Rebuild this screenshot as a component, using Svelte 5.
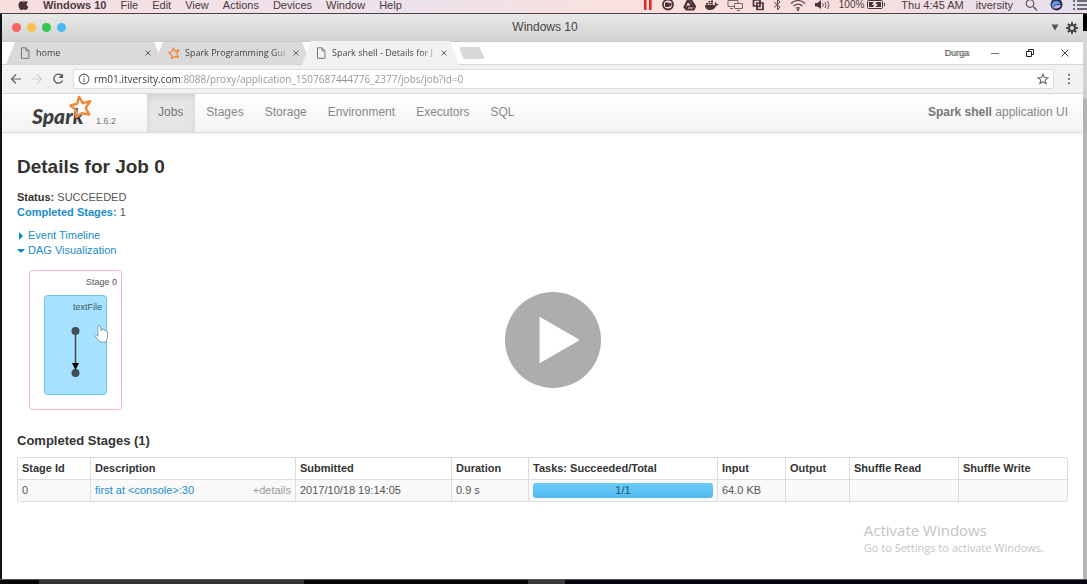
<script>
  const menus = ['File', 'Edit', 'View', 'Actions', 'Devices', 'Window', 'Help'];
  const tabs = [
    { title: 'home', icon: 'page' },
    { title: 'Spark Programming Gui', icon: 'spark' },
    { title: 'Spark shell - Details for J', icon: 'page', active: true }
  ];
  const sections = ['Jobs', 'Stages', 'Storage', 'Environment', 'Executors', 'SQL'];
  const columns = [
    ['Stage Id', 73], ['Description', 205], ['Submitted', 156], ['Duration', 77],
    ['Tasks: Succeeded/Total', 189], ['Input', 68], ['Output', 64],
    ['Shuffle Read', 109], ['Shuffle Write', 109]
  ];
  let url = $state('rm01.itversity.com:8088/proxy/application_1507687444776_2377/jobs/job?id=0');
</script>

{#snippet star(size)}
  <svg width={size} height={size} viewBox="0 0 24 24" fill="none" stroke="#f0883a" stroke-width="2.6" stroke-linejoin="round">
    <path d="M10.500 2l4 6.500 7.500-2-4.500 7 3.500 7-7.500-1.500-6 4-.5-7.500L1.500 11l7-2z" />
  </svg>
{/snippet}

<div class="screen">
  <header class="menubar">
    <nav class="menus" aria-label="Application menu">
      <svg class="apple" width="11" height="13" viewBox="0 0 11 13"><path fill="#4a3338" d="M7.5 0C7.4 1.500 6.500 2.500 5.300 2.600 5.300 1.300 6.300.3 7.500 0zM10 4.200C8 5.500 8.400 8 10.500 8.800 9.800 10.700 8.800 12 7.700 12c-.8 0-1.200-.5-2.100-.5s-1.400.5-2.200.5C2 12 .5 9.500.5 7c0-2.400 1.500-3.700 3-3.700.9 0 1.500.5 2.100.5s1.300-.6 2.300-.6c.8 0 1.600.4 2.100 1z" /></svg>
      <a class="app" href="#app">Windows 10</a>
      {#each menus as m}<a href="#menu">{m}</a>{/each}
    </nav>
    <div class="status">
      <svg width="10" height="14" viewBox="0 0 10 14" fill="#e02428"><path d="M1 0h2.500v12H1zM6 0h2.500v12H6z" /></svg>
      <svg width="14" height="14" viewBox="0 0 14 14"><circle cx="7" cy="6.500" r="5" fill="none" stroke="#4a3338" stroke-width="1.800" /><path d="M4 4.500h4.500v1L10.500 4.500v4l-2-1V9H4z" fill="#4a3338" /></svg>
      <svg width="13" height="14" viewBox="0 0 13 14" fill="none" stroke="#4a3338" stroke-width="2.200"><path d="M5 2L1.500 9l2 2.500h7l1.500-3L8 2zM5 2l4.500 6.500H4.500L3 11" /></svg>
      <svg width="15" height="14" viewBox="0 0 15 14" fill="#4a3338"><path d="M1 7h10c0-1-.4-2 .4-3 1 .6 1.200 1.400 1.200 2 .8-.2 1.500 0 2 .3-.5 1-1.400 1.200-2.300 1.200C11 10.500 9 12 6 12 3 12 1 10.500 1 7zM2 5h2v1.500H2zM4.500 5h2v1.500h-2zM7 5h2v1.500H7zM4.500 3h2v1.500h-2zM7 3h2v1.500H7zM7 1h2v1.500H7z" /></svg>
      <svg width="17" height="14" viewBox="0 0 17 14" fill="none" stroke="#7a6468" stroke-width="1"><path d="M7 8.500H1v-6h10v3M3 10.500h3M7.500 5.500h8v5h-8zM10 12.500h3" /></svg>
      <svg width="13" height="14" viewBox="0 0 13 14" fill="none" stroke="#4a3338" stroke-width="1.700"><path d="M4.500 8H1.500V2H8v3M5 5h6v6.500H5zM8 5v3.500H5" /></svg>
      <svg width="9" height="14" viewBox="0 0 9 14" fill="none" stroke="#5e484d" stroke-width="1"><path d="M1 4l6 5-2.500 3V1.500L7 4 1 9.500" /></svg>
      <svg width="16" height="14" viewBox="0 0 16 14" fill="none" stroke="#5e484d" stroke-width="1.200"><path d="M1 5.500c4-4 10-4 14 0M3.500 8c3-2.600 6-2.600 9 0M6 10.200c1.500-1 2.500-1 4 0" /><circle cx="8" cy="11.700" r=".6" /></svg>
      <svg width="17" height="14" viewBox="0 0 17 14"><path d="M1 5h2.500L7 2v9L3.500 8.500H1z" fill="#4a3338" /><path d="M8.500 5q1.500 2 0 4M11 4q2 3 0 6M13.500 3q3 4 0 8" fill="none" stroke="#6a5459" /></svg>
      <span class="battery">100%
        <svg width="19" height="14" viewBox="0 0 19 14"><rect x=".5" y="2.500" width="15" height="8" rx="1" fill="none" stroke="#4a3338" /><path d="M2 4h4.500L5 7h2.500L6 9H2zM9.500 4H14v5H8.500L11 6H8.500zM17 5h1v3h-1z" fill="#4a3338" /></svg>
      </span>
      <time>Thu 4:45 AM</time>
      <span class="account">itversity</span>
      <svg width="13" height="14" viewBox="0 0 13 14" fill="none" stroke="#5e5058" stroke-width="1.200"><circle cx="5" cy="5.500" r="3.800" /><path d="M8 8.500l4 4" /></svg>
      <svg class="siri" width="13" height="14" viewBox="0 0 13 14"><circle cx="6.500" cy="6.500" r="6" fill="#29294d" /><path d="M2 5q5-5 9 1-4-1-9 4z" fill="#5d9be8" /><path d="M3 10q3-4 8-3-2 5-8 3z" fill="#c0b5ee" /></svg>
      <svg width="15" height="14" viewBox="0 0 15 14" stroke="#4a4550" stroke-width="1.300"><path d="M1 3h2M5 3h10M1 7h2M5 7h10M1 11h2M5 11h10" /></svg>
    </div>
  </header>

  <div class="window">
    <div class="titlebar">
      <div class="lights"><i class="red"></i><i class="yellow"></i><i class="green"></i><i class="blue"></i></div>
      <span>Windows 10</span>
      <div class="tools">
        <svg width="8" height="7" viewBox="0 0 8 7"><path d="M.5.5h7L4 6.500z" fill="#555" /></svg>
        <svg width="12" height="12" viewBox="0 0 12 12" fill="none" stroke="#444"><circle cx="6" cy="6" r="3" stroke-width="2" /><path stroke-width="1.800" d="M6 0v2.500M6 9.500V12M0 6h2.500M9.500 6H12M1.800 1.800l1.700 1.700M8.500 8.500l1.700 1.700M10.200 1.800L8.500 3.500M3.500 8.500l-1.700 1.700" /></svg>
      </div>
    </div>

    <div class="tabstrip">
      {#each tabs as t}
        <div class="tab" class:active={t.active}>
          {#if t.icon === 'page'}
            <svg width="11" height="12" viewBox="0 0 11 12" fill="none" stroke="#777"><path d="M1.500.8h4.500l3 3v7.500H1.500zM6 .8v3h3" /></svg>
          {:else}{@render star(12)}{/if}
          <a href="#tab">{t.title}</a>
          <button aria-label="Close tab"><svg width="6" height="6" viewBox="0 0 6 6" stroke="#666"><path d="M.5.5l5 5M5.500.5l-5 5" /></svg></button>
        </div>
      {/each}
      <button class="newtab" aria-label="New tab"></button>
      <div class="controls">
        <span class="user">Durga</span>
        <button aria-label="Minimize"><svg width="10" height="10" viewBox="0 0 10 10" stroke="#777"><path d="M1 5.500h8" /></svg></button>
        <button aria-label="Restore"><svg width="10" height="10" viewBox="0 0 10 10" fill="none" stroke="#222"><path d="M1.500 3.500h5v5h-5zM3.500 3.500v-2h5v5h-2" /></svg></button>
        <button aria-label="Close"><svg width="10" height="10" viewBox="0 0 10 10" stroke="#444"><path d="M1.500 1.500l7 7M8.500 1.500l-7 7" /></svg></button>
      </div>
    </div>

    <div class="toolbar">
      <button aria-label="Back"><svg width="12" height="12" viewBox="0 0 12 12" fill="none" stroke="#666" stroke-width="1.200"><path d="M11 6H1.500M6 1.500L1.500 6 6 10.500" /></svg></button>
      <button aria-label="Forward"><svg width="12" height="12" viewBox="0 0 12 12" fill="none" stroke="#d2d2d2" stroke-width="1.200"><path d="M1 6h9.500M6 1.500L10.500 6 6 10.500" /></svg></button>
      <button aria-label="Reload"><svg width="12" height="12" viewBox="0 0 12 12"><path d="M10 3A4.500 4.500 0 1 0 10.500 7.500" fill="none" stroke="#555" stroke-width="1.300" /><path d="M11 .5V5H6.500z" fill="#555" /></svg></button>
      <div class="address">
        <svg width="12" height="12" viewBox="0 0 12 12" fill="none" stroke="#666" stroke-width="1.100"><circle cx="6" cy="6" r="4.900" /><path d="M6 5.200V9M6 3v1.200" /></svg>
        <input aria-label="Address" bind:value={url} />
        <button aria-label="Bookmark"><svg width="12" height="12" viewBox="0 0 12 12" fill="none" stroke="#666" stroke-width="1.100"><path d="M6 1.200l1.400 3.300 3.500.3L8.200 7.100l.9 3.500L6 8.700l-3.100 1.900.9-3.500L1.100 4.800l3.500-.3z" /></svg></button>
      </div>
      <button aria-label="Menu"><svg width="12" height="12" viewBox="0 0 12 12" fill="#555"><circle cx="6" cy="1.800" r="1" /><circle cx="6" cy="6" r="1" /><circle cx="6" cy="10.200" r="1" /></svg></button>
    </div>

    <nav class="sparknav" aria-label="Spark">
      <a class="brand" href="#spark" aria-label="Spark 1.6.2">
        <span class="logo">Spark<span class="logostar">{@render star(23)}</span></span>
        <span class="version">1.6.2</span>
      </a>
      {#each sections as s, i}<a class="section" class:current={i === 0} href="#{s}">{s}</a>{/each}
      <p><b>Spark shell</b> application UI</p>
    </nav>

    <main>
      <h1>Details for Job 0</h1>
      <ul>
        <li><b>Status:</b> SUCCEEDED</li>
        <li><a href="#completed"><b>Completed Stages:</b></a> 1</li>
      </ul>
      <div class="toggles">
        <a href="#timeline"><svg width="8" height="8" viewBox="0 0 8 8"><path d="M2 0l4 4-4 4z" fill="#08c" /></svg>Event Timeline</a>
        <a href="#dag"><svg width="8" height="8" viewBox="0 0 8 8"><path d="M0 2h8L4 6z" fill="#08c" /></svg>DAG Visualization</a>
      </div>

      <svg class="dag" width="94" height="141" viewBox="0 0 94 141" role="img" aria-label="Stage 0, textFile">
        <rect x=".5" y=".5" width="92" height="139" rx="3" fill="#fff" stroke="#f7b4c4" />
        <text x="88" y="15" text-anchor="end">Stage 0</text>
        <rect x="15.500" y="25.500" width="62" height="99" rx="3" fill="#a6e2ff" stroke="#6cc4ee" />
        <text x="73" y="40" text-anchor="end">textFile</text>
        <path d="M46.500 61v36" stroke="#444" stroke-width="1.500" />
        <circle cx="46.500" cy="61" r="4" fill="#444f55" />
        <circle cx="46.500" cy="103" r="4" fill="#444f55" />
        <path d="M43 93h7l-3.500 7z" fill="#000" />
        <path d="M69 56.500c0-1.500 2-1.500 2.300 0l1 4.500.3-2h2l.4 1 1.700.2.3.8 1.500.5v6l-1.500 4.500h-6l-2.800-3.500-2.700-3c.8-1.500 2.200-1 3.500.8z" fill="#fff" stroke="#667d94" stroke-width=".7" />
      </svg>

      <h2 id="completed">Completed Stages (1)</h2>
      <table>
        <colgroup>{#each columns as c}<col style="width: {c[1] / 10.5}%" />{/each}</colgroup>
        <thead><tr>{#each columns as c}<th scope="col">{c[0]}</th>{/each}</tr></thead>
        <tbody>
          <tr>
            <td>0</td>
            <td><div class="desc"><a href="#stage">first at &lt;console&gt;:30</a><span>+details</span></div></td>
            <td>2017/10/18 19:14:05</td>
            <td>0.9 s</td>
            <td><div class="progress">1/1</div></td>
            <td>64.0 KB</td>
            <td></td><td></td><td></td>
          </tr>
        </tbody>
      </table>
      <aside><strong>Activate Windows</strong><span>Go to Settings to activate Windows.</span></aside>
    </main>
  </div>
  <footer></footer>
  <button class="play" aria-label="Play"><svg width="96" height="96" viewBox="0 0 96 96"><circle cx="48" cy="48" r="48" fill="#adadad" /><path d="M35 25.500v45L74 48z" fill="#fff" stroke="#fff" stroke-linejoin="round" /></svg></button>
</div>

<style>
  :global(body) { margin: 0; background: #c6c6c6; }
  .screen, .screen :global(*) { box-sizing: border-box; }
  .screen { position: relative; display: flex; flex-direction: column; min-height: 100vh; overflow: hidden; font: 11px/15px "Liberation Sans", Arial, sans-serif; color: #555; background: linear-gradient(#000 31px, #d8d8d8 31px, #d0d0d0 98px, #b5b5b5 99px); }
  a { color: #1a8ccb; text-decoration: none; }
  button { display: flex; align-items: center; justify-content: center; padding: 0; border: 0; background: none; }
  svg { display: block; flex: none; }
  b { color: #333; }

  .menubar { display: flex; justify-content: space-between; align-items: center; height: 14px; padding: 0 0 4px 18px; border-bottom: 1px solid #4b4145; line-height: 10px; white-space: nowrap; color: #4a3a40; background: linear-gradient(90deg, #f8dfe0, #ece2ec 37%, #fbe0dc 60%, #f7dedf 78%, #e4e0ee); }
  .menus, .status, .battery { display: flex; align-items: center; height: 9px; }
  .menus { gap: 14px; }
  .menus a { color: #4a3a40; }
  .menus .app { font-weight: bold; }
  .status { gap: 8px; }
  .battery { gap: 3px; font-size: 10px; }
  time { padding: 0 4px 0 7px; }
  .account { padding-right: 4px; }
  .siri { margin: 0 1px 0 4px; }

  .window { position: relative; flex: 1; display: flex; flex-direction: column; margin-right: 4px; border-left: 2px solid #10131a; background: #fff; }
  .titlebar { display: grid; grid-template-columns: 1fr auto 1fr; align-items: center; height: 28px; padding: 0 5px 0 10px; font-size: 12px; color: #444; border-bottom: 1px solid #c8c8c8; border-radius: 4px 4px 0 0; background: linear-gradient(#e9e9e9, #d2d2d2); }
  .lights { display: flex; gap: 6px; }
  .lights i { width: 9px; height: 9px; border-radius: 50%; }
  .red { background: #fc6560; }
  .yellow { background: #fdc14f; }
  .green { background: #34c84f; }
  .blue { background: #4db8f0; }
  .tools { display: flex; justify-content: flex-end; align-items: center; gap: 7px; }

  .tabstrip { display: flex; align-items: center; height: 23px; padding-left: 4px; font: 9px/14px "Open Sans", "Noto Sans", sans-serif; border-bottom: 1px solid #d4d4d4; }
  .tab { display: flex; align-items: center; gap: 5px; width: 157px; height: 22px; margin-right: -9px; padding: 0 12px 0 14px; background: #dadada; clip-path: polygon(9px 0, calc(100% - 9px) 0, 100% 100%, 0 100%); }
  .tab a { flex: 1; white-space: nowrap; color: #444; mask-image: linear-gradient(90deg, #000 85%, #0003); }
  .tab button { width: 6px; height: 12px; }
  .tab.active { height: 24px; background: #f2f2f2; }
  .newtab { width: 26px; height: 12px; margin-left: 9px; background: #d8d8d8; border-radius: 3px; clip-path: polygon(0 0, 78% 0, 100% 100%, 18% 100%); }
  .controls { display: flex; align-items: center; gap: 25px; margin-left: auto; padding-right: 13px; }
  .user { font-family: "Liberation Sans", sans-serif; color: #666; text-shadow: 1px 0 #aaa; margin-right: -4px; }

  .toolbar { display: flex; align-items: center; gap: 9px; height: 29px; padding: 0 8px; background: #f2f2f2; border-bottom: 1px solid #ddd; }
  .address { flex: 1; display: flex; align-items: center; gap: 4px; height: 20px; padding: 0 4px; border: 1px solid #ddd; background: #fff; border-radius: 2px; }
  input { flex: 1; min-width: 0; height: 16px; padding: 0; border: 0; outline: 0; font: 10px/16px "Open Sans", "Noto Sans", sans-serif; color: transparent; caret-color: #333; background: linear-gradient(90deg, #333 87px, #919191 87px); background-clip: text; }

  .sparknav { display: flex; height: 39px; padding: 0 15px 0 30px; font-size: 12px; line-height: 36px; border-bottom: 1px solid #ddd; background: linear-gradient(#fff, #f3f3f3); box-shadow: 0 1px 4px #0001; }
  .brand { display: flex; align-items: flex-end; gap: 3px; width: 115px; height: 33px; color: #777; line-height: 12px; }
  .logo { position: relative; width: 61px; font: italic 900 21px/22px Lato, "Open Sans", sans-serif; color: #3d3d3f; }
  .logostar { position: absolute; right: 1px; top: -10px; }
  .version { font-size: 9px; }
  .section { padding: 0 10px 0 11px; color: #888; }
  .current { padding-right: 12px; color: #777; background: #e5e5e5; box-shadow: inset 0 3px 6px #00000014; }
  .sparknav p { margin: 0 0 0 auto; color: #888; }
  .sparknav b { color: #777; }

  main { position: relative; flex: 1; padding: 22px 15px 0; }
  h1, h2 { margin: 0; color: #333; }
  h1 { font-size: 19px; line-height: 24px; }
  ul { margin: 11px 0 8px; padding: 0; list-style: none; }
  li b { color: inherit; }
  li:first-child b { color: #333; }
  .toggles { display: flex; flex-direction: column; align-items: flex-start; }
  .toggles a { display: flex; align-items: center; gap: 3px; }
  .dag { margin: 12px 0 22px 12px; }
  .dag text { font-size: 9px; fill: #555; }
  .dag text + rect + text { fill: #3d5866; }
  h2 { font-size: 13px; line-height: 16px; margin-bottom: 8px; }
  table { width: 100%; table-layout: fixed; border-collapse: separate; border-spacing: 0; border: 1px solid #ddd; border-left: 0; border-radius: 3px; }
  th, td { height: 21px; padding: 0 4px; text-align: left; border-left: 1px solid #ddd; white-space: nowrap; color: #555; }
  th { color: #333; }
  td { height: 22px; border-top: 1px solid #ddd; background: #f9f9f9; }
  .desc { display: flex; justify-content: space-between; color: #999; }
  .progress { height: 15px; text-align: center; color: #2c5268; border-radius: 3px; background: linear-gradient(#6cccf8, #52b8ee); }
  aside { position: absolute; right: 39px; bottom: 22px; display: flex; flex-direction: column; font: 11px/18px "Open Sans", "Noto Sans", sans-serif; color: #c4c4c4; }
  aside strong { font-size: 15px; font-weight: normal; }

  footer { height: 5px; border-top: 1px solid #555; background: linear-gradient(90deg, #050505 39px, #333 39px, #333 28%, #050507 28%, #050507 48.600%, #3a3a3e 48.600%, #3a3a3e 52%, #03060a 52%); }
  .play { position: absolute; left: 50.900%; top: 58.200%; transform: translate(-50%, -50%); border-radius: 50%; }
</style>
